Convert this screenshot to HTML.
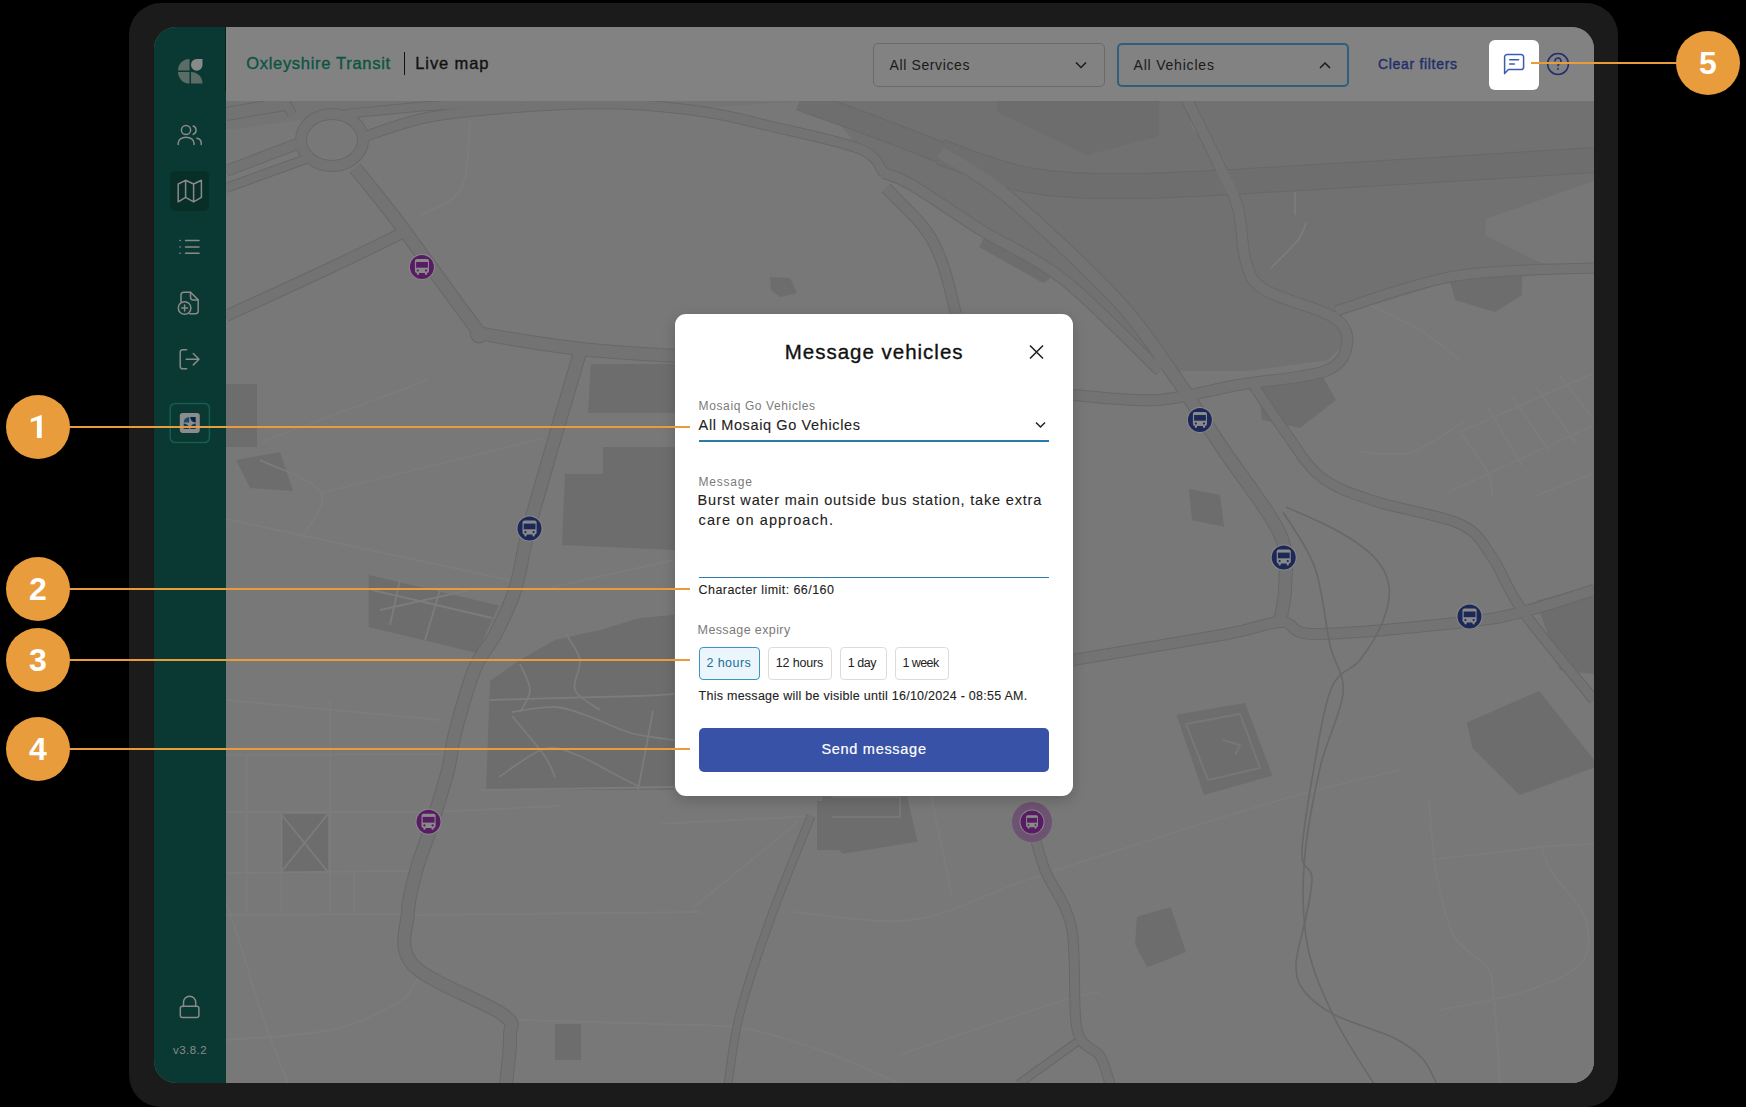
<!DOCTYPE html>
<html><head><meta charset="utf-8">
<style>
*{box-sizing:border-box;margin:0;padding:0}
html,body{width:1746px;height:1107px;overflow:hidden;background:#000;font-family:"Liberation Sans",sans-serif}
.a{position:absolute}
#frame{left:129px;top:3px;width:1489px;height:1104px;background:#1b1b1b;border-radius:32px}
#screen{left:154px;top:27px;width:1440px;height:1056px;border-radius:22px;overflow:hidden;background:#767676}
#side{left:0;top:0;width:72px;height:1056px;background:#0a3833}
#header{left:72px;top:0;width:1368px;height:74px;background:#828282}
#map{left:72px;top:74px;width:1368px;height:982px;background:#7b7b7b}
.t{position:absolute;white-space:nowrap;line-height:1}
#modal{left:674.5px;top:313.7px;width:398.5px;height:482.3px;background:#fff;border-radius:11px;box-shadow:0 4px 14px rgba(0,0,0,0.18)}
.co{position:absolute;width:64px;height:64px;border-radius:50%;background:#e99c3b;color:#fff;font-weight:bold;font-size:32px;text-align:center;line-height:64px}
.ln{position:absolute;height:2px;background:#e99c3b}
.chip{position:absolute;top:646.5px;height:33px;border:1px solid #dcdcdc;border-radius:4px;background:#fff;font-size:13px;color:#222}
.chip span{position:absolute;white-space:nowrap;line-height:1}
</style></head>
<body>
<div id="frame" class="a"></div>
<div id="screen" class="a">
  <div id="map" class="a"></div>
<!--MAPSVG-->
<svg class="a" style="left:-154px;top:-27px" width="1746" height="1107"><rect x="226" y="100" width="1368" height="984" fill="#787878"/>
<path d="M820.0 100.0 L1594.0 100.0 L1594.0 270.0 L1442.0 284.0 L1334.0 317.0 L1344.0 344.0 L1328.0 360.0 L1247.0 371.0 L1171.0 371.0 L1063.0 279.0 L981.0 230.0 L912.0 185.0 L884.0 173.0 L860.0 149.0 Z" fill="#717171"/>
<path d="M1485.7 219.0 L1594.0 181.0 L1594.0 270.0 L1540.0 262.7 L1485.7 235.6 Z" fill="#777777"/>
<path d="M226.0 100.0 L820.0 100.0 L700.0 108.0 L537.0 104.0 L430.0 110.0 L300.0 120.0 L226.0 130.0 Z" fill="#747474"/>
<path d="M997.0 100.0 L1159.0 100.0 L1159.0 136.0 L1087.0 155.0 L997.0 112.0 Z" fill="#6d6d6d"/>
<path d="M989.0 229.0 L1051.0 278.0 L1043.0 283.0 L979.0 247.0 Z" fill="#6d6d6d"/>
<path d="M1257.0 378.0 L1320.0 372.0 L1336.0 400.0 L1300.0 428.0 L1262.0 420.0 Z" fill="#6d6d6d"/>
<path d="M1189.0 489.0 L1220.0 495.0 L1224.0 527.0 L1192.0 520.0 Z" fill="#6d6d6d"/>
<path d="M1176.5 714.7 L1245.0 703.0 L1272.5 775.5 L1204.0 795.0 Z" fill="#6d6d6d"/>
<path d="M1466.7 722.5 L1539.0 691.0 L1594.0 759.8 L1594.0 767.6 L1519.6 795.0 L1472.5 748.0 Z" fill="#6d6d6d"/>
<path d="M1137.0 916.7 L1170.6 907.0 L1186.0 952.0 L1147.0 967.6 L1135.0 944.0 Z" fill="#6d6d6d"/>
<path d="M281.0 814.0 L328.0 814.0 L328.0 872.0 L281.0 872.0 Z" fill="#6d6d6d"/>
<path d="M368.7 575.0 L498.8 605.5 L477.0 653.0 L368.7 627.0 Z" fill="#6d6d6d"/>
<path d="M490.0 681.0 L520.0 660.0 L555.0 640.0 L600.0 630.0 L640.0 618.0 L674.0 615.0 L674.0 790.0 L486.0 790.0 Z" fill="#6d6d6d"/>
<path d="M591.0 364.0 L675.0 364.0 L675.0 413.0 L588.0 413.0 Z" fill="#6d6d6d"/>
<path d="M603.0 447.0 L675.0 447.0 L675.0 550.0 L562.0 545.0 L565.0 474.0 L603.0 474.0 Z" fill="#6d6d6d"/>
<path d="M555.0 1024.0 L581.0 1024.0 L581.0 1060.0 L555.0 1060.0 Z" fill="#6d6d6d"/>
<path d="M226.0 384.0 L257.0 384.0 L257.0 447.0 L226.0 447.0 Z" fill="#6d6d6d"/>
<path d="M236.0 460.0 L280.0 452.0 L293.0 491.0 L250.0 488.0 Z" fill="#6d6d6d"/>
<path d="M770.0 277.0 L790.0 278.0 L797.0 293.0 L780.0 297.0 L771.0 290.0 Z" fill="#6d6d6d"/>
<path d="M1536.0 601.0 L1594.0 585.0 L1594.0 674.0 L1560.0 670.0 Z" fill="#6d6d6d"/>
<path d="M1450.0 281.0 L1522.0 275.0 L1522.0 295.0 L1495.0 312.0 L1455.0 300.0 Z" fill="#6d6d6d"/>
<path d="M822.0 796.6 L907.0 796.6 L917.6 841.8 L843.0 853.7 L824.6 837.8 Z" fill="#6d6d6d"/>
<path d="M817.0 801.0 L850.0 801.0 L850.0 850.0 L817.0 850.0 Z" fill="#6d6d6d"/>
<path d="M226.0 812.0 L420.0 812.0" fill="none" stroke="#7c7c7c" stroke-width="1.8"/>
<path d="M430.0 812.0 L560.0 806.0" fill="none" stroke="#7c7c7c" stroke-width="1.8"/>
<path d="M226.0 873.0 L410.0 871.0" fill="none" stroke="#7c7c7c" stroke-width="1.8"/>
<path d="M226.0 915.0 L406.0 914.0" fill="none" stroke="#7c7c7c" stroke-width="1.8"/>
<path d="M415.0 915.0 L700.0 912.0" fill="none" stroke="#7c7c7c" stroke-width="1.8"/>
<path d="M330.0 700.0 L330.0 915.0" fill="none" stroke="#7c7c7c" stroke-width="1.8"/>
<path d="M247.0 755.0 L247.0 915.0" fill="none" stroke="#7c7c7c" stroke-width="1.8"/>
<path d="M281.5 814.0 L281.5 915.0" fill="none" stroke="#7c7c7c" stroke-width="1.8"/>
<path d="M354.0 873.0 L354.0 915.0" fill="none" stroke="#7c7c7c" stroke-width="1.8"/>
<path d="M226.0 755.0 L450.0 754.0" fill="none" stroke="#7c7c7c" stroke-width="1.8"/>
<path d="M226.0 901.0 C228.3 908.0 234.2 924.5 240.0 943.0 C245.8 961.5 253.0 988.5 261.0 1012.0 C269.0 1035.5 283.5 1072.0 288.0 1084.0" fill="none" stroke="#7c7c7c" stroke-width="1.8"/>
<path d="M226.0 1040.0 C243.3 1038.3 301.2 1036.3 330.0 1030.0 C358.8 1023.7 384.0 1011.3 399.0 1002.0 C414.0 992.7 416.5 978.7 420.0 974.0" fill="none" stroke="#7c7c7c" stroke-width="1.8"/>
<path d="M281.0 814.0 L328.0 872.0" fill="none" stroke="#7c7c7c" stroke-width="1.8"/>
<path d="M328.0 814.0 L281.0 872.0" fill="none" stroke="#7c7c7c" stroke-width="1.8"/>
<path d="M520.0 1020.0 L660.0 1024.0" fill="none" stroke="#7c7c7c" stroke-width="1.8"/>
<path d="M480.0 790.0 L674.0 787.0" fill="none" stroke="#7c7c7c" stroke-width="1.8"/>
<path d="M660.0 824.0 L811.0 816.0" fill="none" stroke="#7c7c7c" stroke-width="1.8"/>
<path d="M793.0 912.0 C812.8 913.3 874.5 924.8 912.0 920.0 C949.5 915.2 986.7 893.7 1018.0 883.0 C1049.3 872.3 1056.3 869.8 1100.0 856.0 C1143.7 842.2 1230.0 814.3 1280.0 800.0 C1330.0 785.7 1380.0 775.0 1400.0 770.0" fill="none" stroke="#7c7c7c" stroke-width="1.8"/>
<path d="M694.0 907.0 L798.0 822.0" fill="none" stroke="#7c7c7c" stroke-width="1.8"/>
<path d="M952.0 896.0 L931.0 796.0" fill="none" stroke="#7c7c7c" stroke-width="1.8"/>
<path d="M660.0 1024.0 C674.7 1024.8 719.2 1023.8 748.0 1029.0 C776.8 1034.2 807.7 1045.8 833.0 1055.0 C858.3 1064.2 888.8 1079.2 900.0 1084.0" fill="none" stroke="#7c7c7c" stroke-width="1.8"/>
<path d="M899.0 1055.0 C925.5 1046.2 1024.5 1012.5 1058.0 1002.0 C1091.5 991.5 1093.0 993.7 1100.0 992.0" fill="none" stroke="#7c7c7c" stroke-width="1.8"/>
<path d="M1429.0 800.0 C1430.2 812.0 1431.8 849.3 1436.0 872.0 C1440.2 894.7 1445.5 920.2 1454.0 936.0 C1462.5 951.8 1480.3 956.3 1487.0 967.0 C1493.7 977.7 1491.8 980.5 1494.0 1000.0 C1496.2 1019.5 1499.0 1070.0 1500.0 1084.0" fill="none" stroke="#7c7c7c" stroke-width="1.8"/>
<path d="M1432.0 860.0 C1450.2 857.8 1514.0 849.7 1541.0 847.0 C1568.0 844.3 1585.2 844.5 1594.0 844.0" fill="none" stroke="#7c7c7c" stroke-width="1.8"/>
<path d="M1541.0 845.0 C1542.8 849.5 1544.7 859.8 1552.0 872.0 C1559.3 884.2 1580.2 902.8 1585.0 918.0 C1589.8 933.2 1591.3 950.7 1581.0 963.0 C1570.7 975.3 1546.5 984.2 1523.0 992.0 C1499.5 999.8 1453.8 1007.0 1440.0 1010.0" fill="none" stroke="#7c7c7c" stroke-width="1.8"/>
<path d="M470.0 122.0 C468.5 133.2 469.3 173.5 461.0 189.0 C452.7 204.5 426.8 210.7 420.0 215.0" fill="none" stroke="#7c7c7c" stroke-width="1.8"/>
<path d="M540.0 590.0 L674.0 560.0" fill="none" stroke="#7c7c7c" stroke-width="1.8"/>
<path d="M226.0 519.0 L509.0 580.0" fill="none" stroke="#7c7c7c" stroke-width="1.8"/>
<path d="M264.0 441.0 L428.0 380.0" fill="none" stroke="#7c7c7c" stroke-width="1.8"/>
<path d="M321.0 493.0 L544.0 438.0" fill="none" stroke="#7c7c7c" stroke-width="1.8"/>
<path d="M260.0 460.0 C270.2 465.5 314.3 479.7 321.0 493.0 C327.7 506.3 303.5 532.2 300.0 540.0" fill="none" stroke="#7c7c7c" stroke-width="1.8"/>
<path d="M226.0 700.0 L440.0 720.0" fill="none" stroke="#7c7c7c" stroke-width="1.8"/>
<path d="M512.0 712.0 C519.2 711.2 542.3 706.3 555.0 707.0 C567.7 707.7 575.3 711.7 588.0 716.0 C600.7 720.3 616.7 729.0 631.0 733.0 C645.3 737.0 666.8 738.8 674.0 740.0" fill="none" stroke="#7c7c7c" stroke-width="1.8"/>
<path d="M499.0 777.0 C506.5 772.3 531.0 752.7 544.0 749.0 C557.0 745.3 564.3 750.3 577.0 755.0 C589.7 759.7 609.2 771.5 620.0 777.0 C630.8 782.5 638.3 786.2 642.0 788.0" fill="none" stroke="#7c7c7c" stroke-width="1.8"/>
<path d="M512.0 716.0 C517.3 722.5 536.8 744.8 544.0 755.0 C551.2 765.2 553.2 773.3 555.0 777.0" fill="none" stroke="#7c7c7c" stroke-width="1.8"/>
<path d="M653.0 711.0 L638.0 790.0" fill="none" stroke="#7c7c7c" stroke-width="1.8"/>
<path d="M520.0 664.0 C521.7 668.3 530.0 682.0 530.0 690.0 C530.0 698.0 521.7 708.3 520.0 712.0" fill="none" stroke="#7c7c7c" stroke-width="1.8"/>
<path d="M566.0 634.0 C568.3 638.3 578.5 650.7 580.0 660.0 C581.5 669.3 571.7 681.7 575.0 690.0 C578.3 698.3 595.8 706.7 600.0 710.0" fill="none" stroke="#7c7c7c" stroke-width="1.8"/>
<path d="M490.0 700.0 C501.7 699.7 535.0 698.7 560.0 698.0 C585.0 697.3 621.0 696.7 640.0 696.0 C659.0 695.3 668.3 694.3 674.0 694.0" fill="none" stroke="#7c7c7c" stroke-width="1.8"/>
<path d="M372.0 590.0 L492.0 618.0" fill="none" stroke="#7c7c7c" stroke-width="1.8"/>
<path d="M380.0 610.0 L470.0 590.0" fill="none" stroke="#7c7c7c" stroke-width="1.8"/>
<path d="M400.0 580.0 L390.0 625.0" fill="none" stroke="#7c7c7c" stroke-width="1.8"/>
<path d="M440.0 590.0 L425.0 640.0" fill="none" stroke="#7c7c7c" stroke-width="1.8"/>
<path d="M1306.0 223.0 C1304.7 225.8 1303.8 232.5 1298.0 240.0 C1292.2 247.5 1275.5 263.3 1271.0 268.0" fill="none" stroke="#7c7c7c" stroke-width="1.8"/>
<path d="M1295.0 192.0 L1295.0 215.0" fill="none" stroke="#7c7c7c" stroke-width="1.8"/>
<path d="M1187.0 100.0 C1188.3 105.0 1190.3 122.8 1195.0 130.0 C1199.7 137.2 1211.7 140.8 1215.0 143.0" fill="none" stroke="#7c7c7c" stroke-width="1.8"/>
<path d="M1460.0 432.0 L1594.0 373.0" fill="none" stroke="#7c7c7c" stroke-width="1.8"/>
<path d="M1447.0 493.0 L1594.0 425.0" fill="none" stroke="#7c7c7c" stroke-width="1.8"/>
<path d="M1533.0 497.0 L1594.0 473.0" fill="none" stroke="#7c7c7c" stroke-width="1.8"/>
<path d="M1460.0 432.0 C1464.7 438.8 1482.7 462.2 1488.0 473.0 C1493.3 483.8 1491.3 493.0 1492.0 497.0" fill="none" stroke="#7c7c7c" stroke-width="1.8"/>
<path d="M1488.0 408.0 L1522.0 466.0" fill="none" stroke="#7c7c7c" stroke-width="1.8"/>
<path d="M1512.0 397.0 L1550.0 452.0" fill="none" stroke="#7c7c7c" stroke-width="1.8"/>
<path d="M1536.0 387.0 L1576.0 443.0" fill="none" stroke="#7c7c7c" stroke-width="1.8"/>
<path d="M1560.0 376.0 L1594.0 420.0" fill="none" stroke="#7c7c7c" stroke-width="1.8"/>
<path d="M1361.0 452.0 C1369.5 452.0 1394.8 457.2 1412.0 452.0 C1429.2 446.8 1455.3 426.2 1464.0 421.0" fill="none" stroke="#7c7c7c" stroke-width="1.8"/>
<path d="M1360.0 300.0 C1370.0 305.0 1403.3 320.0 1420.0 330.0 C1436.7 340.0 1453.3 355.0 1460.0 360.0" fill="none" stroke="#7c7c7c" stroke-width="1.8"/>
<path d="M1186.0 724.0 L1240.0 714.0 L1260.0 768.0 L1208.0 780.0 L1186.0 724.0" fill="none" stroke="#777" stroke-width="2"/>
<path d="M1223.0 740.0 L1240.0 745.0 L1235.0 755.0" fill="none" stroke="#777" stroke-width="2"/>
<path d="M832.0 797.0 L900.0 797.0 L900.0 817.0 L832.0 817.0" fill="none" stroke="#777" stroke-width="2"/>
<ellipse cx="332" cy="140" rx="31" ry="26" fill="none" stroke="#686868" stroke-width="12"/>
<path d="M226.0 171.0 L297.0 144.0" fill="none" stroke="#686868" stroke-width="12" stroke-linejoin="round"/>
<path d="M226.0 188.0 L306.0 159.0" fill="none" stroke="#686868" stroke-width="10" stroke-linejoin="round"/>
<path d="M226.0 114.0 L285.0 104.0" fill="none" stroke="#686868" stroke-width="14" stroke-linejoin="round"/>
<path d="M284.0 100.0 L292.0 114.0" fill="none" stroke="#686868" stroke-width="10" stroke-linejoin="round"/>
<path d="M345.0 114.0 C359.2 112.7 404.2 107.8 430.0 106.0 C455.8 104.2 478.3 103.8 500.0 103.0 C521.7 102.2 550.0 101.3 560.0 101.0" fill="none" stroke="#686868" stroke-width="10" stroke-linejoin="round"/>
<path d="M361.0 138.0 C372.5 134.5 400.7 122.3 430.0 117.0 C459.3 111.7 505.3 108.2 537.0 106.0 C568.7 103.8 592.0 103.0 620.0 104.0 C648.0 105.0 680.0 108.3 705.0 112.0 C730.0 115.7 744.2 119.8 770.0 126.0 C795.8 132.2 841.0 141.2 860.0 149.0 C879.0 156.8 880.0 169.0 884.0 173.0" fill="none" stroke="#686868" stroke-width="11" stroke-linejoin="round"/>
<path d="M355.0 168.0 C362.2 177.0 378.0 195.5 398.0 222.0 C418.0 248.5 460.7 308.3 475.0 327.0 C489.3 345.7 466.3 330.3 484.0 334.0 C501.7 337.7 549.2 345.3 581.0 349.0 C612.8 352.7 659.3 354.8 675.0 356.0" fill="none" stroke="#686868" stroke-width="14" stroke-linejoin="round"/>
<path d="M404.0 232.0 C391.7 238.0 359.7 254.0 330.0 268.0 C300.3 282.0 243.3 308.0 226.0 316.0" fill="none" stroke="#686868" stroke-width="12" stroke-linejoin="round"/>
<path d="M581.0 349.0 C577.5 360.8 568.7 390.2 560.0 420.0 C551.3 449.8 536.5 499.7 529.0 528.0 C521.5 556.3 520.7 572.2 515.0 590.0 C509.3 607.8 501.7 622.0 495.0 635.0 C488.3 648.0 481.7 651.7 475.0 668.0 C468.3 684.3 459.5 716.0 455.0 733.0 C450.5 750.0 452.2 753.8 448.0 770.0 C443.8 786.2 435.2 813.7 430.0 830.0 C424.8 846.3 420.7 854.3 417.0 868.0 C413.3 881.7 408.7 895.8 408.0 912.0 C407.3 928.2 397.3 948.0 413.0 965.0 C428.7 982.0 485.8 1002.2 502.0 1014.0 C518.2 1025.8 509.3 1024.3 510.0 1036.0 C510.7 1047.7 506.7 1076.0 506.0 1084.0" fill="none" stroke="#686868" stroke-width="14" stroke-linejoin="round"/>
<path d="M800.0 100.0 C811.7 104.2 846.7 116.3 870.0 125.0 C893.3 133.7 928.3 147.5 940.0 152.0" fill="none" stroke="#686868" stroke-width="22" stroke-linejoin="round"/>
<path d="M940.0 152.0 C954.7 156.7 996.3 174.3 1028.0 180.0 C1059.7 185.7 1084.7 186.3 1130.0 186.0 C1175.3 185.7 1222.7 182.3 1300.0 178.0 C1377.3 173.7 1545.0 163.0 1594.0 160.0" fill="none" stroke="#686868" stroke-width="26" stroke-linejoin="round"/>
<path d="M940.0 152.0 C951.3 159.5 978.5 172.3 1008.0 197.0 C1037.5 221.7 1089.8 271.0 1117.0 300.0 C1144.2 329.0 1158.3 353.7 1171.0 371.0 C1183.7 388.3 1184.0 390.5 1193.0 404.0 C1202.0 417.5 1210.5 430.3 1225.0 452.0 C1239.5 473.7 1270.0 511.3 1280.0 534.0 C1290.0 556.7 1285.0 573.5 1285.0 588.0 C1285.0 602.5 1280.8 615.5 1280.0 621.0" fill="none" stroke="#686868" stroke-width="14" stroke-linejoin="round"/>
<path d="M884.0 173.0 C888.7 175.0 895.8 175.5 912.0 185.0 C928.2 194.5 955.8 214.3 981.0 230.0 C1006.2 245.7 1033.2 255.5 1063.0 279.0 C1092.8 302.5 1143.8 355.7 1160.0 371.0" fill="none" stroke="#686868" stroke-width="12" stroke-linejoin="round"/>
<path d="M886.0 188.0 C892.5 194.8 915.5 216.2 925.0 229.0 C934.5 241.8 937.8 250.8 943.0 265.0 C948.2 279.2 953.8 305.8 956.0 314.0" fill="none" stroke="#686868" stroke-width="12" stroke-linejoin="round"/>
<path d="M1187.0 100.0 C1192.3 110.8 1210.5 147.0 1219.0 165.0 C1227.5 183.0 1233.5 191.8 1238.0 208.0 C1242.5 224.2 1241.5 248.3 1246.0 262.0 C1250.5 275.7 1250.5 280.8 1265.0 290.0 C1279.5 299.2 1319.3 308.0 1333.0 317.0 C1346.7 326.0 1348.3 335.0 1347.0 344.0 C1345.7 353.0 1343.2 364.2 1325.0 371.0 C1306.8 377.8 1266.0 380.2 1238.0 385.0 C1210.0 389.8 1184.5 398.3 1157.0 400.0 C1129.5 401.7 1087.0 395.8 1073.0 395.0" fill="none" stroke="#686868" stroke-width="12" stroke-linejoin="round"/>
<path d="M1336.0 311.0 C1355.8 305.2 1412.0 283.2 1455.0 276.0 C1498.0 268.8 1570.8 269.3 1594.0 268.0" fill="none" stroke="#686868" stroke-width="11" stroke-linejoin="round"/>
<path d="M1250.0 380.0 C1256.0 388.8 1274.2 416.8 1286.0 433.0 C1297.8 449.2 1306.3 465.7 1321.0 477.0 C1335.7 488.3 1350.8 493.2 1374.0 501.0 C1397.2 508.8 1440.3 514.7 1460.0 524.0 C1479.7 533.3 1481.7 542.7 1492.0 557.0 C1502.3 571.3 1505.0 586.2 1522.0 610.0 C1539.0 633.8 1582.0 685.0 1594.0 700.0" fill="none" stroke="#686868" stroke-width="11" stroke-linejoin="round"/>
<path d="M1073.0 660.0 C1098.7 655.7 1192.2 640.3 1227.0 634.0 C1261.8 627.7 1267.2 622.0 1282.0 622.0 C1296.8 622.0 1285.5 634.0 1316.0 634.0 C1346.5 634.0 1430.7 625.7 1465.0 622.0 C1499.3 618.3 1500.5 617.3 1522.0 612.0 C1543.5 606.7 1582.0 593.7 1594.0 590.0" fill="none" stroke="#686868" stroke-width="12" stroke-linejoin="round"/>
<path d="M1031.0 822.0 C1033.3 830.0 1038.2 852.3 1045.0 870.0 C1051.8 887.7 1066.3 901.5 1071.6 928.0 C1076.9 954.5 1072.3 1007.7 1077.0 1029.0 C1081.7 1050.3 1094.5 1046.8 1100.0 1056.0 C1105.5 1065.2 1108.3 1079.3 1110.0 1084.0" fill="none" stroke="#686868" stroke-width="11" stroke-linejoin="round"/>
<path d="M1077.0 1042.0 L1018.5 1084.0" fill="none" stroke="#686868" stroke-width="9" stroke-linejoin="round"/>
<path d="M811.0 816.0 C804.2 833.3 781.8 887.2 770.0 920.0 C758.2 952.8 747.0 985.7 740.0 1013.0 C733.0 1040.3 730.0 1072.2 728.0 1084.0" fill="none" stroke="#686868" stroke-width="9" stroke-linejoin="round"/>
<ellipse cx="332" cy="140" rx="31" ry="26" fill="none" stroke="#737373" stroke-width="10"/>
<path d="M226.0 171.0 L297.0 144.0" fill="none" stroke="#737373" stroke-width="10" stroke-linejoin="round"/>
<path d="M226.0 188.0 L306.0 159.0" fill="none" stroke="#737373" stroke-width="8" stroke-linejoin="round"/>
<path d="M226.0 114.0 L285.0 104.0" fill="none" stroke="#737373" stroke-width="12" stroke-linejoin="round"/>
<path d="M284.0 100.0 L292.0 114.0" fill="none" stroke="#737373" stroke-width="8" stroke-linejoin="round"/>
<path d="M345.0 114.0 C359.2 112.7 404.2 107.8 430.0 106.0 C455.8 104.2 478.3 103.8 500.0 103.0 C521.7 102.2 550.0 101.3 560.0 101.0" fill="none" stroke="#737373" stroke-width="8" stroke-linejoin="round"/>
<path d="M361.0 138.0 C372.5 134.5 400.7 122.3 430.0 117.0 C459.3 111.7 505.3 108.2 537.0 106.0 C568.7 103.8 592.0 103.0 620.0 104.0 C648.0 105.0 680.0 108.3 705.0 112.0 C730.0 115.7 744.2 119.8 770.0 126.0 C795.8 132.2 841.0 141.2 860.0 149.0 C879.0 156.8 880.0 169.0 884.0 173.0" fill="none" stroke="#737373" stroke-width="9" stroke-linejoin="round"/>
<path d="M355.0 168.0 C362.2 177.0 378.0 195.5 398.0 222.0 C418.0 248.5 460.7 308.3 475.0 327.0 C489.3 345.7 466.3 330.3 484.0 334.0 C501.7 337.7 549.2 345.3 581.0 349.0 C612.8 352.7 659.3 354.8 675.0 356.0" fill="none" stroke="#737373" stroke-width="12" stroke-linejoin="round"/>
<path d="M404.0 232.0 C391.7 238.0 359.7 254.0 330.0 268.0 C300.3 282.0 243.3 308.0 226.0 316.0" fill="none" stroke="#737373" stroke-width="10" stroke-linejoin="round"/>
<path d="M581.0 349.0 C577.5 360.8 568.7 390.2 560.0 420.0 C551.3 449.8 536.5 499.7 529.0 528.0 C521.5 556.3 520.7 572.2 515.0 590.0 C509.3 607.8 501.7 622.0 495.0 635.0 C488.3 648.0 481.7 651.7 475.0 668.0 C468.3 684.3 459.5 716.0 455.0 733.0 C450.5 750.0 452.2 753.8 448.0 770.0 C443.8 786.2 435.2 813.7 430.0 830.0 C424.8 846.3 420.7 854.3 417.0 868.0 C413.3 881.7 408.7 895.8 408.0 912.0 C407.3 928.2 397.3 948.0 413.0 965.0 C428.7 982.0 485.8 1002.2 502.0 1014.0 C518.2 1025.8 509.3 1024.3 510.0 1036.0 C510.7 1047.7 506.7 1076.0 506.0 1084.0" fill="none" stroke="#737373" stroke-width="12" stroke-linejoin="round"/>
<path d="M800.0 100.0 C811.7 104.2 846.7 116.3 870.0 125.0 C893.3 133.7 928.3 147.5 940.0 152.0" fill="none" stroke="#6e6e6e" stroke-width="20" stroke-linejoin="round"/>
<path d="M940.0 152.0 C954.7 156.7 996.3 174.3 1028.0 180.0 C1059.7 185.7 1084.7 186.3 1130.0 186.0 C1175.3 185.7 1222.7 182.3 1300.0 178.0 C1377.3 173.7 1545.0 163.0 1594.0 160.0" fill="none" stroke="#6e6e6e" stroke-width="24" stroke-linejoin="round"/>
<path d="M940.0 152.0 C951.3 159.5 978.5 172.3 1008.0 197.0 C1037.5 221.7 1089.8 271.0 1117.0 300.0 C1144.2 329.0 1158.3 353.7 1171.0 371.0 C1183.7 388.3 1184.0 390.5 1193.0 404.0 C1202.0 417.5 1210.5 430.3 1225.0 452.0 C1239.5 473.7 1270.0 511.3 1280.0 534.0 C1290.0 556.7 1285.0 573.5 1285.0 588.0 C1285.0 602.5 1280.8 615.5 1280.0 621.0" fill="none" stroke="#737373" stroke-width="12" stroke-linejoin="round"/>
<path d="M884.0 173.0 C888.7 175.0 895.8 175.5 912.0 185.0 C928.2 194.5 955.8 214.3 981.0 230.0 C1006.2 245.7 1033.2 255.5 1063.0 279.0 C1092.8 302.5 1143.8 355.7 1160.0 371.0" fill="none" stroke="#737373" stroke-width="10" stroke-linejoin="round"/>
<path d="M886.0 188.0 C892.5 194.8 915.5 216.2 925.0 229.0 C934.5 241.8 937.8 250.8 943.0 265.0 C948.2 279.2 953.8 305.8 956.0 314.0" fill="none" stroke="#737373" stroke-width="10" stroke-linejoin="round"/>
<path d="M1187.0 100.0 C1192.3 110.8 1210.5 147.0 1219.0 165.0 C1227.5 183.0 1233.5 191.8 1238.0 208.0 C1242.5 224.2 1241.5 248.3 1246.0 262.0 C1250.5 275.7 1250.5 280.8 1265.0 290.0 C1279.5 299.2 1319.3 308.0 1333.0 317.0 C1346.7 326.0 1348.3 335.0 1347.0 344.0 C1345.7 353.0 1343.2 364.2 1325.0 371.0 C1306.8 377.8 1266.0 380.2 1238.0 385.0 C1210.0 389.8 1184.5 398.3 1157.0 400.0 C1129.5 401.7 1087.0 395.8 1073.0 395.0" fill="none" stroke="#737373" stroke-width="10" stroke-linejoin="round"/>
<path d="M1336.0 311.0 C1355.8 305.2 1412.0 283.2 1455.0 276.0 C1498.0 268.8 1570.8 269.3 1594.0 268.0" fill="none" stroke="#737373" stroke-width="9" stroke-linejoin="round"/>
<path d="M1250.0 380.0 C1256.0 388.8 1274.2 416.8 1286.0 433.0 C1297.8 449.2 1306.3 465.7 1321.0 477.0 C1335.7 488.3 1350.8 493.2 1374.0 501.0 C1397.2 508.8 1440.3 514.7 1460.0 524.0 C1479.7 533.3 1481.7 542.7 1492.0 557.0 C1502.3 571.3 1505.0 586.2 1522.0 610.0 C1539.0 633.8 1582.0 685.0 1594.0 700.0" fill="none" stroke="#737373" stroke-width="9" stroke-linejoin="round"/>
<path d="M1073.0 660.0 C1098.7 655.7 1192.2 640.3 1227.0 634.0 C1261.8 627.7 1267.2 622.0 1282.0 622.0 C1296.8 622.0 1285.5 634.0 1316.0 634.0 C1346.5 634.0 1430.7 625.7 1465.0 622.0 C1499.3 618.3 1500.5 617.3 1522.0 612.0 C1543.5 606.7 1582.0 593.7 1594.0 590.0" fill="none" stroke="#737373" stroke-width="10" stroke-linejoin="round"/>
<path d="M1031.0 822.0 C1033.3 830.0 1038.2 852.3 1045.0 870.0 C1051.8 887.7 1066.3 901.5 1071.6 928.0 C1076.9 954.5 1072.3 1007.7 1077.0 1029.0 C1081.7 1050.3 1094.5 1046.8 1100.0 1056.0 C1105.5 1065.2 1108.3 1079.3 1110.0 1084.0" fill="none" stroke="#737373" stroke-width="9" stroke-linejoin="round"/>
<path d="M1077.0 1042.0 L1018.5 1084.0" fill="none" stroke="#737373" stroke-width="7" stroke-linejoin="round"/>
<path d="M811.0 816.0 C804.2 833.3 781.8 887.2 770.0 920.0 C758.2 952.8 747.0 985.7 740.0 1013.0 C733.0 1040.3 730.0 1072.2 728.0 1084.0" fill="none" stroke="#737373" stroke-width="7" stroke-linejoin="round"/>
<path d="M1286.0 507.0 C1294.3 510.8 1321.3 521.7 1336.0 530.0 C1350.7 538.3 1365.2 547.7 1374.0 557.0 C1382.8 566.3 1387.5 575.3 1389.0 586.0 C1390.5 596.7 1387.8 608.7 1383.0 621.0 C1378.2 633.3 1368.7 648.7 1360.0 660.0 C1351.3 671.3 1339.0 669.2 1331.0 689.0 C1323.0 708.8 1316.8 751.5 1312.0 779.0 C1307.2 806.5 1302.0 837.7 1302.0 854.0 C1302.0 870.3 1311.3 866.5 1312.0 877.0 C1312.7 887.5 1308.7 902.5 1306.0 917.0 C1303.3 931.5 1296.3 951.7 1296.0 964.0 C1295.7 976.3 1297.5 982.5 1304.0 991.0 C1310.5 999.5 1320.0 1007.2 1335.0 1015.0 C1350.0 1022.8 1379.5 1030.8 1394.0 1038.0 C1408.5 1045.2 1414.8 1050.3 1422.0 1058.0 C1429.2 1065.7 1434.5 1079.7 1437.0 1084.0" fill="none" stroke="#686868" stroke-width="1.6"/>
<path d="M1283.0 512.0 C1288.3 521.3 1307.2 545.8 1315.0 568.0 C1322.8 590.2 1325.3 624.2 1330.0 645.0 C1334.7 665.8 1344.7 672.5 1343.0 693.0 C1341.3 713.5 1326.5 739.2 1320.0 768.0 C1313.5 796.8 1306.0 836.0 1304.0 866.0 C1302.0 896.0 1302.8 922.5 1308.0 948.0 C1313.2 973.5 1324.0 996.3 1335.0 1019.0 C1346.0 1041.7 1367.5 1073.2 1374.0 1084.0" fill="none" stroke="#686868" stroke-width="1.6"/></svg>
  <div id="header" class="a"></div>
  <div id="side" class="a"></div>
</div>

<!-- sidebar content (page coords) -->
<div class="a" style="left:170px;top:171px;width:39px;height:40px;background:#072e27;border-radius:5px"></div>
<div class="a" style="left:224.6px;top:27px;width:1px;height:64px;background:#02241d"></div>
<div class="a" style="left:224.6px;top:91px;width:1px;height:992px;background:#053a2e"></div>
<svg class="a" style="left:0;top:0" width="1746" height="1107" viewBox="0 0 1746 1107">
  <g fill="#5b6c67">
    <path d="M178 70.5 A11.5 11.5 0 0 1 189.5 59 L189.5 70.5 Z"/>
    <path d="M178 72 L189.5 72 L189.5 83.5 A11.5 11.5 0 0 1 178 72 Z"/>
    <path d="M191 72 A11.5 11.5 0 0 1 202.5 83.5 L191 83.5 Z"/>
  </g>
  <path d="M191 65 A5.75 5.75 0 0 0 196.75 70.75 A5.75 5.75 0 0 0 202.5 65 L202.5 59 L196.75 59 A5.75 5.75 0 0 0 191 65 Z" fill="#8a8a8a"/>
  <g fill="none" stroke="#8a8a8a" stroke-width="1.5" stroke-linecap="round" stroke-linejoin="round">
    <!-- users -->
    <circle cx="186" cy="130" r="4.6"/>
    <path d="M178.2 144.6 V143 A7.8 5.8 0 0 1 194 143 V144.6"/>
    <path d="M193.2 126 A4.5 4.5 0 0 1 193.2 134.4"/>
    <path d="M196.8 138.2 A5 5 0 0 1 201.2 143 V144.6"/>
    <!-- map -->
    <path d="M178.2 184 L185.6 180.3 L193.6 184 L201.4 180.3 V197.4 L193.6 201.8 L185.6 197.4 L178.2 201.8 Z M185.6 180.3 V197.4 M193.6 184 V201.8"/>
    <!-- list -->
    <path d="M185.5 240.5 H199 M185.5 247 H199 M185.5 253.3 H199"/>
    <path d="M180 240.5 H180.2 M180 247 H180.2 M180 253.3 H180.2"/>
    <!-- file plus -->
    <path d="M181 302 V295 A2.8 2.8 0 0 1 183.8 292.2 H190.5 L198.2 299.9 V311 A2.7 2.7 0 0 1 195.5 313.7 H189.5"/>
    <path d="M190.5 292.2 V297.2 A2.7 2.7 0 0 0 193.2 299.9 H198.2"/>
    <circle cx="184.6" cy="308" r="6.3"/>
    <path d="M184.6 305 V311 M181.6 308 H187.6"/>
    <!-- logout -->
    <path d="M186.6 349.7 H182.6 A2.4 2.4 0 0 0 180.2 352.1 V366.4 A2.4 2.4 0 0 0 182.6 368.8 H186.6"/>
    <path d="M186.2 359.2 H198.8 M193.3 353.5 L199 359.2 L193.3 364.9"/>
    <!-- lock -->
    <path d="M183.5 1006.5 V1002.3 A6.1 6.1 0 0 1 195.7 1002.3 V1006.5"/>
    <rect x="180.3" y="1006.3" width="18.6" height="11.3" rx="2.2"/>
  </g>
  <rect x="170.2" y="403.4" width="39.2" height="39.2" rx="5" fill="none" stroke="#155e4f" stroke-width="1.5"/>
  <rect x="179.8" y="412.9" width="20" height="20" rx="2.8" fill="#8c8c8c"/>
  <path d="M183.7 422.5 A5.5 5.5 0 0 1 189.2 417 V422.5 Z" fill="#1b4a6e"/>
  <path d="M190.2 417 H195.7 V422.5 A6 6 0 0 1 190.2 417 Z" fill="#04243f"/>
  <path d="M183.7 423.5 A6 6 0 0 1 189.2 429 H183.7 Z" fill="#0c3a5f"/>
  <path d="M195.7 423.5 V429 H190.2 A6 6 0 0 1 195.7 423.5 Z" fill="#0c3a5f"/>
</svg>
<div class="t" style="left:173.00px;top:1045.27px;font-size:11.5px;color:#8a8a8a;letter-spacing:0.454px">v3.8.2</div>

<!-- markers -->
<svg class="a" style="left:0;top:0" width="1746" height="1107">
<g transform="translate(421.9,266.9)"><circle r="13" fill="#8a8a8a"/><circle r="12" fill="#571c63"/><g transform="scale(1)" fill="#8a8a8a"><rect x="-7" y="-8" width="14.1" height="14.1" rx="2"/><rect x="-5.1" y="5" width="2.2" height="3" rx="0.8"/><rect x="3" y="5" width="2.2" height="3" rx="0.8"/><rect x="-5.8" y="-4.9" width="11.8" height="5.7" fill="#571c63"/><circle cx="-4.1" cy="3.6" r="1.1" fill="#571c63"/><circle cx="4.1" cy="3.6" r="1.1" fill="#571c63"/></g></g>
<g transform="translate(529.5,528.5)"><circle r="13" fill="#8a8a8a"/><circle r="12" fill="#1b2858"/><g transform="scale(1)" fill="#8a8a8a"><rect x="-7" y="-8" width="14.1" height="14.1" rx="2"/><rect x="-5.1" y="5" width="2.2" height="3" rx="0.8"/><rect x="3" y="5" width="2.2" height="3" rx="0.8"/><rect x="-5.8" y="-4.9" width="11.8" height="5.7" fill="#1b2858"/><circle cx="-4.1" cy="3.6" r="1.1" fill="#1b2858"/><circle cx="4.1" cy="3.6" r="1.1" fill="#1b2858"/></g></g>
<g transform="translate(1199.9,419.9)"><circle r="13" fill="#8a8a8a"/><circle r="12" fill="#1b2858"/><g transform="scale(1)" fill="#8a8a8a"><rect x="-7" y="-8" width="14.1" height="14.1" rx="2"/><rect x="-5.1" y="5" width="2.2" height="3" rx="0.8"/><rect x="3" y="5" width="2.2" height="3" rx="0.8"/><rect x="-5.8" y="-4.9" width="11.8" height="5.7" fill="#1b2858"/><circle cx="-4.1" cy="3.6" r="1.1" fill="#1b2858"/><circle cx="4.1" cy="3.6" r="1.1" fill="#1b2858"/></g></g>
<g transform="translate(1283.7,557.5)"><circle r="13" fill="#8a8a8a"/><circle r="12" fill="#1b2858"/><g transform="scale(1)" fill="#8a8a8a"><rect x="-7" y="-8" width="14.1" height="14.1" rx="2"/><rect x="-5.1" y="5" width="2.2" height="3" rx="0.8"/><rect x="3" y="5" width="2.2" height="3" rx="0.8"/><rect x="-5.8" y="-4.9" width="11.8" height="5.7" fill="#1b2858"/><circle cx="-4.1" cy="3.6" r="1.1" fill="#1b2858"/><circle cx="4.1" cy="3.6" r="1.1" fill="#1b2858"/></g></g>
<g transform="translate(1469.5,616.4)"><circle r="13" fill="#8a8a8a"/><circle r="12" fill="#1b2858"/><g transform="scale(1)" fill="#8a8a8a"><rect x="-7" y="-8" width="14.1" height="14.1" rx="2"/><rect x="-5.1" y="5" width="2.2" height="3" rx="0.8"/><rect x="3" y="5" width="2.2" height="3" rx="0.8"/><rect x="-5.8" y="-4.9" width="11.8" height="5.7" fill="#1b2858"/><circle cx="-4.1" cy="3.6" r="1.1" fill="#1b2858"/><circle cx="4.1" cy="3.6" r="1.1" fill="#1b2858"/></g></g>
<g transform="translate(428.5,821.8)"><circle r="13" fill="#8a8a8a"/><circle r="12" fill="#571c63"/><g transform="scale(1)" fill="#8a8a8a"><rect x="-7" y="-8" width="14.1" height="14.1" rx="2"/><rect x="-5.1" y="5" width="2.2" height="3" rx="0.8"/><rect x="3" y="5" width="2.2" height="3" rx="0.8"/><rect x="-5.8" y="-4.9" width="11.8" height="5.7" fill="#571c63"/><circle cx="-4.1" cy="3.6" r="1.1" fill="#571c63"/><circle cx="4.1" cy="3.6" r="1.1" fill="#571c63"/></g></g>
<g transform="translate(1032,822)"><circle r="20" fill="#6d5271"/><circle r="12.5" fill="#8a8a8a"/><circle r="11.5" fill="#571c63"/><g transform="scale(0.85)" fill="#8a8a8a"><rect x="-7" y="-8" width="14.1" height="14.1" rx="2"/><rect x="-5.1" y="5" width="2.2" height="3" rx="0.8"/><rect x="3" y="5" width="2.2" height="3" rx="0.8"/><rect x="-5.8" y="-4.9" width="11.8" height="5.7" fill="#571c63"/><circle cx="-4.1" cy="3.6" r="1.1" fill="#571c63"/><circle cx="4.1" cy="3.6" r="1.1" fill="#571c63"/></g></g>
</svg>

<!-- header texts -->
<div class="t" style="left:246.20px;top:55.03px;font-size:16.5px;color:#0b5442;letter-spacing:0.697px;-webkit-text-stroke:0.35px #0b5442">Oxleyshire Transit</div>
<div class="a" style="left:403.8px;top:52px;width:1.5px;height:23px;background:#111"></div>
<div class="t" style="left:415.30px;top:55.03px;font-size:16.5px;color:#111;letter-spacing:0.875px;-webkit-text-stroke:0.35px #111">Live map</div>

<div class="a" style="left:873px;top:43px;width:232px;height:44px;border:1px solid #6a6a6a;border-radius:5px"></div>
<div class="t" style="left:889.50px;top:58.15px;font-size:14px;color:#1a1a1a;letter-spacing:0.624px">All Services</div>
<div class="a" style="left:1117px;top:43px;width:232px;height:44px;border:2px solid #2f5f7c;border-radius:5px"></div>
<div class="t" style="left:1133.50px;top:58.15px;font-size:14px;color:#1a1a1a;letter-spacing:0.801px">All Vehicles</div>
<svg class="a" style="left:0;top:0" width="1746" height="1107">
  <path d="M1076 62.5 L1081 67.5 L1086 62.5" fill="none" stroke="#1a1a1a" stroke-width="1.5"/>
  <path d="M1320 68 L1325 63 L1330 68" fill="none" stroke="#1a1a1a" stroke-width="1.5"/>
</svg>
<div class="t" style="left:1377.90px;top:57.05px;font-size:14px;color:#1f2f6b;letter-spacing:0.692px;-webkit-text-stroke:0.4px #1f2f6b">Clear filters</div>
<div class="a" style="left:1488.5px;top:39.5px;width:50px;height:50px;background:#fff;border-radius:6px"></div>
<svg class="a" style="left:0;top:0" width="1746" height="1107">
  <g fill="none" stroke="#3b5bb5" stroke-width="1.5" stroke-linejoin="round" stroke-linecap="round">
    <path d="M1504.6 73.6 V57 A2.6 2.6 0 0 1 1507.2 54.4 H1521 A2.6 2.6 0 0 1 1523.6 57 V67 A2.6 2.6 0 0 1 1521 69.6 H1508.4 Z"/>
    <path d="M1509.7 59.8 H1518.6 M1509.7 64 H1514.3"/>
  </g>
  <circle cx="1558" cy="64" r="10.4" fill="none" stroke="#1f2f6b" stroke-width="1.5"/>
  <path d="M1555 61 A3 3 0 1 1 1559 63.8 C1558.2 64.2 1558 64.8 1558 65.8" fill="none" stroke="#1f2f6b" stroke-width="1.5" stroke-linecap="round"/>
  <circle cx="1558" cy="69" r="0.9" fill="#1f2f6b"/>
</svg>

<!-- modal -->
<div id="modal" class="a"></div>
<div class="t" style="left:784.70px;top:342.45px;font-size:20.5px;color:#111;letter-spacing:0.994px;-webkit-text-stroke:0.35px #111">Message vehicles</div>
<svg class="a" style="left:0;top:0" width="1746" height="1107">
  <path d="M1030 345.5 L1043 358.5 M1043 345.5 L1030 358.5" stroke="#222" stroke-width="1.6" fill="none"/>
  <path d="M1036 422.5 L1040.5 427 L1045 422.5" fill="none" stroke="#222" stroke-width="1.5"/>
</svg>
<div class="t" style="left:698.60px;top:400.14px;font-size:12px;color:#7a7a7a;letter-spacing:0.614px">Mosaiq Go Vehicles</div>
<div class="t" style="left:698.60px;top:418.23px;font-size:14.5px;color:#222;letter-spacing:0.622px;-webkit-text-stroke:0.1px #222">All Mosaiq Go Vehicles</div>
<div class="a" style="left:698.5px;top:440px;width:350px;height:1.5px;background:#2a7bab"></div>
<div class="t" style="left:698.60px;top:475.94px;font-size:12px;color:#7a7a7a;letter-spacing:0.764px">Message</div>
<div class="t" style="left:697.60px;top:493.03px;font-size:14.5px;color:#222;letter-spacing:0.813px;-webkit-text-stroke:0.1px #222">Burst water main outside bus station, take extra</div>
<div class="t" style="left:698.60px;top:512.53px;font-size:14.5px;color:#222;letter-spacing:1.096px;-webkit-text-stroke:0.1px #222">care on approach.</div>
<div class="a" style="left:698.5px;top:576.5px;width:350px;height:1.5px;background:#2a7bab"></div>
<div class="t" style="left:698.60px;top:583.92px;font-size:12.5px;color:#222;letter-spacing:0.432px;-webkit-text-stroke:0.1px #222">Character limit: 66/160</div>
<div class="t" style="left:697.60px;top:624.12px;font-size:12.5px;color:#7a7a7a;letter-spacing:0.386px">Message expiry</div>
<div class="chip" style="left:699px;width:60.5px;background:#eaf6fb;border-color:#3a95c5;color:#1a6f9b"></div>
<div class="chip" style="left:768px;width:63.5px"></div>
<div class="chip" style="left:840px;width:46.5px"></div>
<div class="chip" style="left:895px;width:53.5px"></div>
<div class="t" style="left:706.40px;top:656.72px;font-size:12.5px;color:#1a6f9b;letter-spacing:0.443px">2 hours</div>
<div class="t" style="left:775.70px;top:656.72px;font-size:12.5px;color:#222;letter-spacing:-0.142px">12 hours</div>
<div class="t" style="left:847.70px;top:656.72px;font-size:12.5px;color:#222;letter-spacing:-0.432px">1 day</div>
<div class="t" style="left:902.40px;top:656.72px;font-size:12.5px;color:#222;letter-spacing:-0.551px">1 week</div>
<div class="t" style="left:698.60px;top:689.82px;font-size:12.5px;color:#222;letter-spacing:0.259px;-webkit-text-stroke:0.1px #222">This message will be visible until 16/10/2024 - 08:55 AM.</div>
<div class="a" style="left:699px;top:728px;width:349.5px;height:44px;background:#3752a6;border-radius:5px"></div>
<div class="t" style="left:821.40px;top:742.13px;font-size:14.5px;color:#fff;letter-spacing:0.712px;-webkit-text-stroke:0.2px #fff">Send message</div>

<!-- callouts -->
<div class="ln" style="left:60px;top:426px;width:630px"></div>
<div class="ln" style="left:60px;top:588px;width:630px"></div>
<div class="ln" style="left:60px;top:659px;width:630px"></div>
<div class="ln" style="left:60px;top:748px;width:630px"></div>
<div class="ln" style="left:1531px;top:62px;width:160px"></div>
<div class="co" style="left:6px;top:395px"></div>
<svg class="a" style="left:0;top:0" width="80" height="470"><path d="M36.9 438.1 V420.2 L30.8 422.3 V418.9 L41.2 415 H41.7 V438.1 Z" fill="#fff"/></svg>
<div class="co" style="left:6px;top:557px">2</div>
<div class="co" style="left:6px;top:628px">3</div>
<div class="co" style="left:6px;top:717px">4</div>
<div class="co" style="left:1676px;top:31px">5</div>
</body></html>
